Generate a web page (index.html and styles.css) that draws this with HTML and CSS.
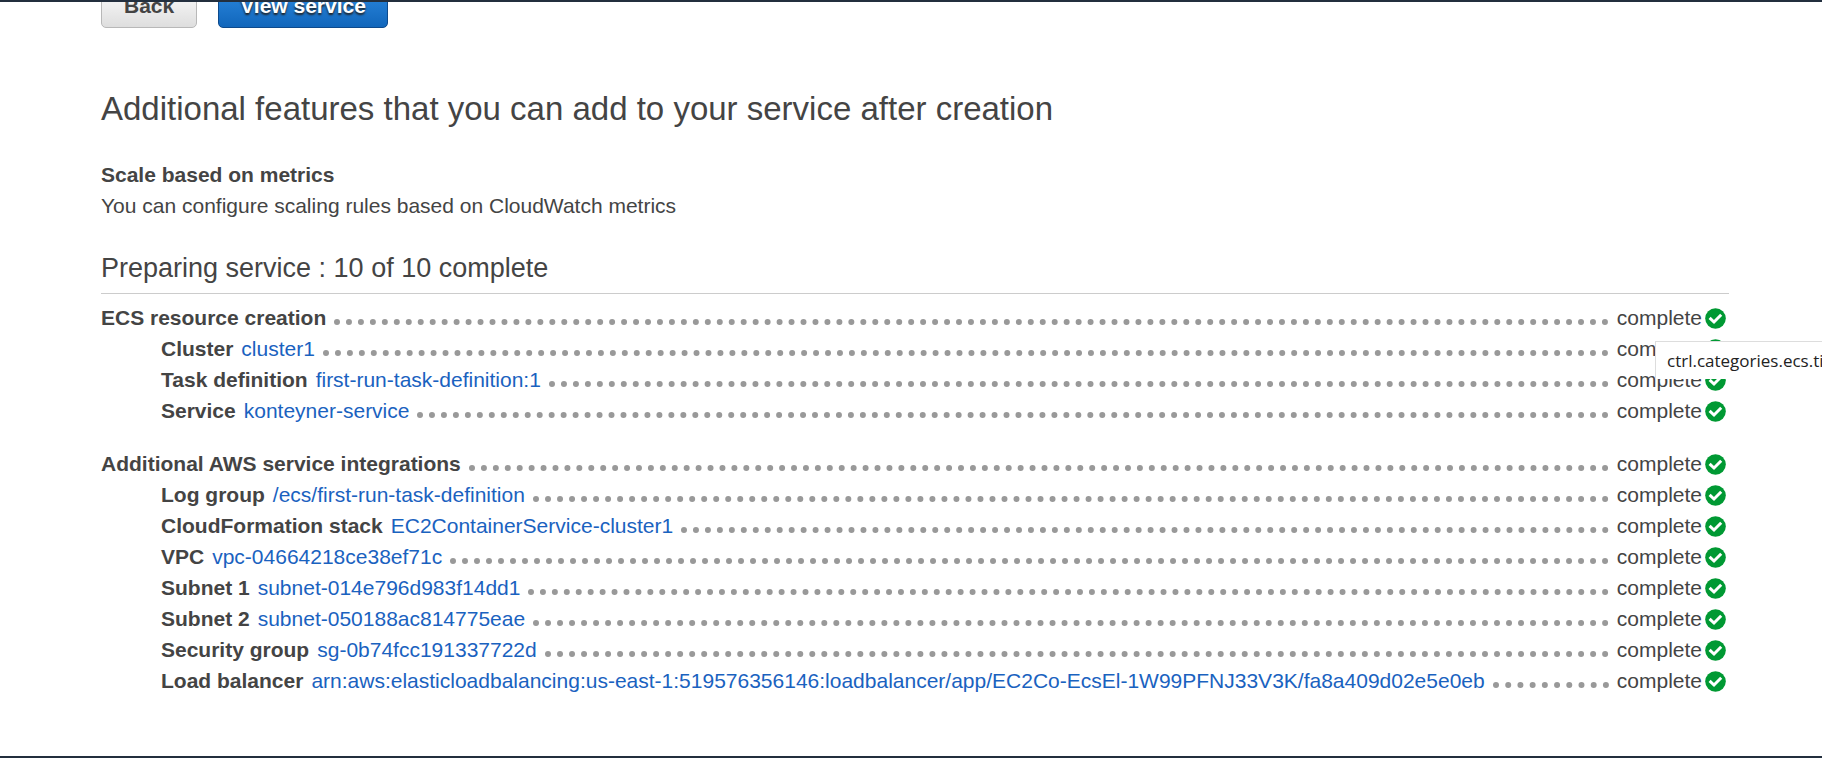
FILE: index.html
```html
<!DOCTYPE html>
<html lang="en">
<head>
<meta charset="utf-8">
<title>Preparing service</title>
<link rel="stylesheet" href="styles.css">
</head>
<body>
<svg class="sprite" aria-hidden="true">
  <symbol id="check" viewBox="0 0 21 21">
    <circle cx="10.5" cy="10.5" r="10.3" fill="#093"/>
    <path d="M4.6 9.9 9 14 16.2 6.8" fill="none" stroke="#fff" stroke-width="3"/>
  </symbol>
</svg>
<main class="page">
  <div class="actions">
    <button class="btn" type="button">Back</button>
    <button class="btn btn-primary" type="button">View service</button>
  </div>

  <h1 class="title">Additional features that you can add to your service after creation</h1>
  <h3 class="subtitle">Scale based on metrics</h3>
  <p class="text">You can configure scaling rules based on CloudWatch metrics</p>

  <h2 class="section">Preparing service : 10 of 10 complete</h2>

  <ul class="group">
    <li class="row"><b>ECS resource creation</b><span class="dots"></span><span class="status">complete<svg class="icon"><use href="#check"/></svg></span></li>
    <li class="row item"><b>Cluster</b><a href="#">cluster1</a><span class="dots"></span><span class="status">complete<svg class="icon"><use href="#check"/></svg></span></li>
    <li class="row item"><b>Task definition</b><a href="#">first-run-task-definition:1</a><span class="dots"></span><span class="status">complete<svg class="icon"><use href="#check"/></svg></span></li>
    <li class="row item"><b>Service</b><a href="#">konteyner-service</a><span class="dots"></span><span class="status">complete<svg class="icon"><use href="#check"/></svg></span></li>
  </ul>

  <ul class="group">
    <li class="row"><b>Additional AWS service integrations</b><span class="dots"></span><span class="status">complete<svg class="icon"><use href="#check"/></svg></span></li>
    <li class="row item"><b>Log group</b><a href="#">/ecs/first-run-task-definition</a><span class="dots"></span><span class="status">complete<svg class="icon"><use href="#check"/></svg></span></li>
    <li class="row item"><b>CloudFormation stack</b><a href="#">EC2ContainerService-cluster1</a><span class="dots"></span><span class="status">complete<svg class="icon"><use href="#check"/></svg></span></li>
    <li class="row item"><b>VPC</b><a href="#">vpc-04664218ce38ef71c</a><span class="dots"></span><span class="status">complete<svg class="icon"><use href="#check"/></svg></span></li>
    <li class="row item"><b>Subnet 1</b><a href="#">subnet-014e796d983f14dd1</a><span class="dots"></span><span class="status">complete<svg class="icon"><use href="#check"/></svg></span></li>
    <li class="row item"><b>Subnet 2</b><a href="#">subnet-050188ac814775eae</a><span class="dots"></span><span class="status">complete<svg class="icon"><use href="#check"/></svg></span></li>
    <li class="row item"><b>Security group</b><a href="#">sg-0b74fcc191337722d</a><span class="dots"></span><span class="status">complete<svg class="icon"><use href="#check"/></svg></span></li>
    <li class="row item"><b>Load balancer</b><a href="#">arn:aws:elasticloadbalancing:us-east-1:519576356146:loadbalancer/app/EC2Co-EcsEl-1W99PFNJ33V3K/fa8a409d02e5e0eb</a><span class="dots"></span><span class="status">complete<svg class="icon"><use href="#check"/></svg></span></li>
  </ul>
  <div class="tooltip" role="tooltip">ctrl.categories.ecs.title</div>
</main>
</body>
</html>
```

FILE: styles.css
```css
* {
  box-sizing: border-box;
}

body {
  margin: 0;
  background: #fff;
  color: #444;
  font-family: "Liberation Sans", Arial, sans-serif;
  font-size: 21px;
  line-height: 31px;
}

.sprite {
  display: none;
}

.page {
  position: relative;
  min-height: 100vh;
  padding: 0 93px 0 101px;
  border-top: 2px solid #232f3e;
  border-bottom: 2px solid #232f3e;
  overflow: hidden;
}

/* The row is scrolled partly under the top bar. */
.actions {
  display: flex;
  gap: 21px;
  margin-top: -18px;
}

.btn {
  height: 44px;
  padding: 0 22px;
  border: 1px solid #b8b8b8;
  border-radius: 5px;
  background: linear-gradient(#fff, #dedede);
  color: #444;
  font: bold 21px "Liberation Sans", Arial, sans-serif;
}

.btn-primary {
  padding: 0 21px;
  border-color: #0d4a8c;
  background: linear-gradient(#2e8ce3, #1166bb);
  color: #fff;
  text-shadow: 0 2px 2px #222;
}

.title,
.subtitle,
.section,
.text {
  margin: 0;
}

.title {
  margin-top: 61px;
  font-size: 33px;
  font-weight: normal;
  line-height: 40px;
}

.subtitle {
  margin-top: 30px;
  font-size: 21px;
}

.section {
  margin-top: 29px;
  padding-bottom: 7px;
  border-bottom: 1px solid #ccc;
  font-size: 27px;
  font-weight: normal;
  line-height: 36px;
}

.group {
  margin: 8px 0 22px;
  padding: 0;
  list-style: none;
}

.row {
  display: flex;
  gap: 8px;
  padding-right: 3px;
  white-space: nowrap;
}

.item {
  padding-left: 60px;
}

.row a {
  color: #1a62bf;
  text-decoration: none;
}

.dots {
  flex: 1;
  height: 23px;
  border-bottom: 6px dotted #999;
}

.status {
  display: flex;
  align-items: flex-end;
  gap: 3px;
}

.icon {
  width: 21px;
  height: 21px;
  margin-bottom: 4px;
}

.tooltip {
  position: absolute;
  top: 339px;
  left: calc(100% - 167px);
  height: 38px;
  padding: 3px 11px;
  border-top: 1px solid #ddd;
  border-left: 1px solid #ddd;
  background: #fff;
  color: #222;
  font-family: "Open Sans", "Noto Sans", sans-serif;
  font-size: 17px;
  white-space: nowrap;
}
```
